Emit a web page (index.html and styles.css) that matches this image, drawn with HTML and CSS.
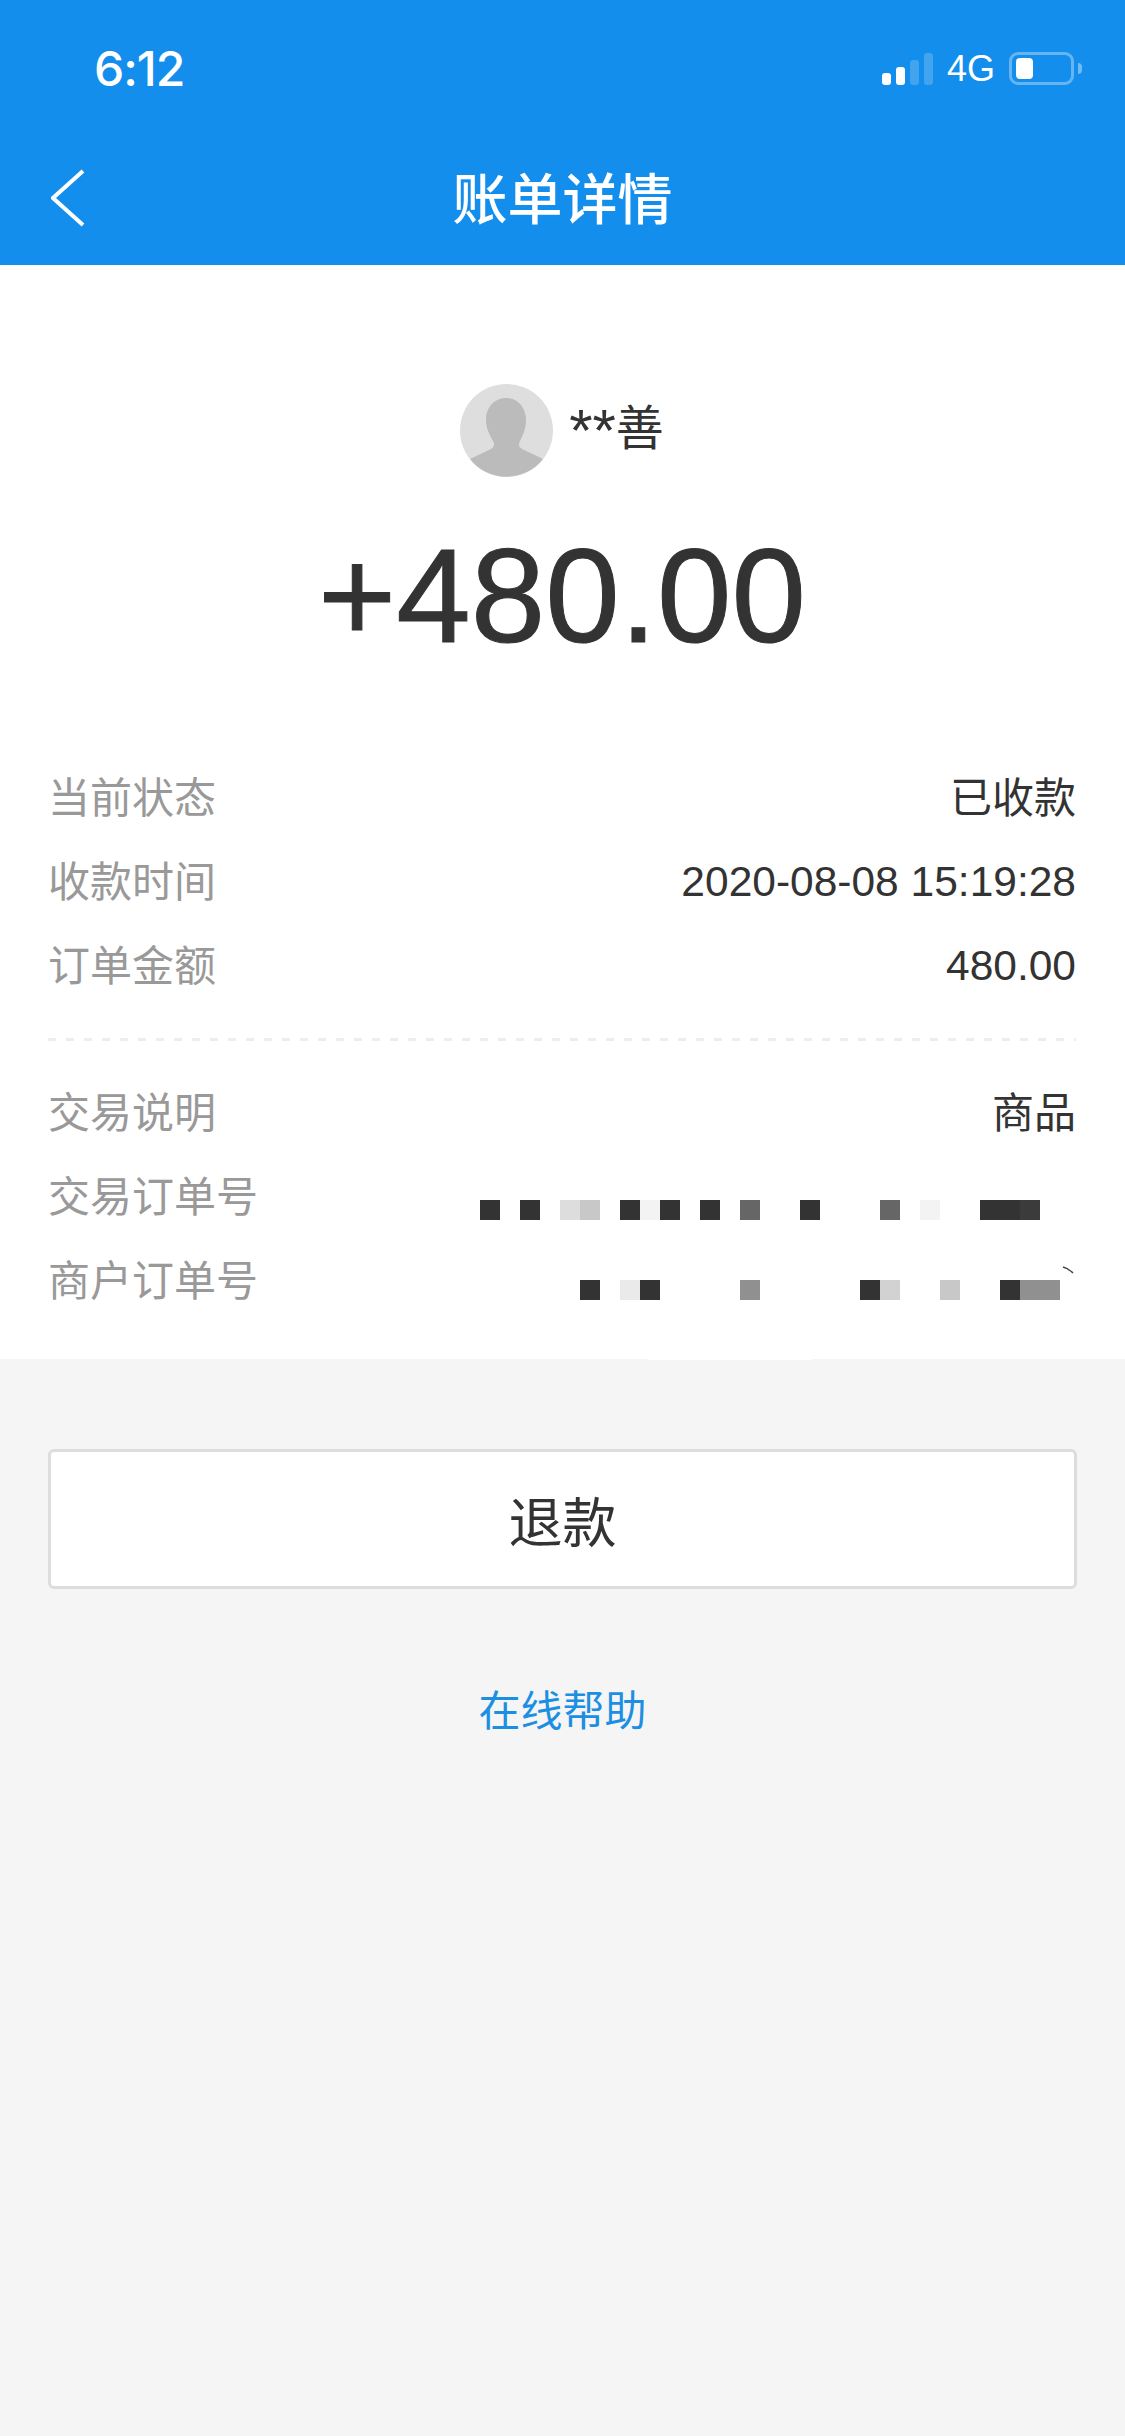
FILE: index.html
```html
<!DOCTYPE html>
<html lang="zh-CN">
<head>
    <meta charset="UTF-8">
    <meta name="viewport" content="width=device-width, initial-scale=1.0">
    <title>账单详情</title>
    <link rel="stylesheet" href="styles.css">
</head>
<body>

    <header class="top">
        <div class="status-bar">
            <span class="clock">6:12</span>
            <div class="status-icons">
                <div class="signal">
                    <i class="bar bar-1"></i>
                    <i class="bar bar-2"></i>
                    <i class="bar bar-3 off"></i>
                    <i class="bar bar-4 off"></i>
                </div>
                <span class="network">4G</span>
                <div class="battery"><i class="battery-level"></i></div>
                <i class="battery-nub"></i>
            </div>
        </div>
        <div class="nav-bar">
            <svg class="back" width="34" height="58" viewBox="0 0 34 58">
                <path d="M32 2 L2 29 L32 56" fill="none" stroke="#fff" stroke-width="4"/>
            </svg>
            <h1 class="nav-title">账单详情</h1>
        </div>
    </header>

    <section class="bill">
        <div class="payer">
            <svg class="avatar" width="93" height="93" viewBox="0 0 93 93">
                <circle cx="46.5" cy="46.5" r="46.5" fill="#dedede"/>
                <path d="M46 14 C34 14 26 24 26 36 C26 45 30 51 33 57 C35 61 34 63 31 65 L10 75 A46.5 46.5 0 0 0 83 75 L62 65 C59 63 58 61 60 57 C63 51 66 45 66 36 C66 24 58 14 46 14 Z" fill="#bbbbbb"/>
            </svg>
            <span class="payer-name"><span class="stars">**</span>善</span>
        </div>
        <div class="amount">+480.00</div>

        <div class="rows">
            <div class="row"><span class="label">当前状态</span><span class="value cjk">已收款</span></div>
            <div class="row"><span class="label">收款时间</span><span class="value">2020-08-08 15:19:28</span></div>
            <div class="row"><span class="label">订单金额</span><span class="value">480.00</span></div>
        </div>

        <div class="divider"></div>

        <div class="rows">
            <div class="row"><span class="label">交易说明</span><span class="value cjk">商品</span></div>
            <div class="row">
                <span class="label">交易订单号</span>
                <div class="mosaic">
                    <i class="d"></i><i></i><i class="d"></i><i></i><i class="g2"></i><i class="g3"></i><i></i><i class="d"></i><i class="g0"></i><i class="d"></i><i></i><i class="d"></i><i></i><i class="g5"></i><i></i><i></i><i class="d"></i><i></i><i></i><i></i><i class="g5"></i><i></i><i class="g0"></i><i></i><i></i><i class="d"></i><i class="d"></i><i class="d2"></i><i></i>
                </div>
            </div>
            <div class="row">
                <span class="label">商户订单号</span>
                <div class="mosaic mosaic-low">
                    <i></i><i></i><i></i><i></i><i></i><i class="d"></i><i></i><i class="g1"></i><i class="d"></i><i></i><i></i><i></i><i></i><i class="g4"></i><i></i><i></i><i></i><i></i><i></i><i class="d"></i><i class="g2b"></i><i></i><i></i><i class="g3"></i><i></i><i></i><i class="d"></i><i class="g4"></i><i class="g4"></i>
                </div>
                <svg class="tick" width="12" height="8" viewBox="0 0 12 8">
                    <path d="M1 1 C5 2 8 4 11 7" fill="none" stroke="#444" stroke-width="1.6"/>
                </svg>
            </div>
        </div>
    </section>

    <button class="refund">退款</button>
    <a class="help" href="#">在线帮助</a>

</body>
</html>
```

FILE: styles.css
```css
body {
    margin: 0;
    width: 1125px;
    height: 2436px;
    overflow: hidden;
    background-color: #f5f5f5;
    font-family: "Liberation Sans", "Noto Sans CJK SC", sans-serif;
    color: #333333;
}

.top {
    height: 265px;
    background-color: #138eec;
    color: #ffffff;
}

.status-bar {
    height: 132px;
    display: flex;
    justify-content: space-between;
    align-items: flex-start;
    box-sizing: border-box;
    padding: 0 43px 0 94px;
}

.clock {
    margin-top: 42px;
    font-family: Inter, sans-serif;
    font-size: 48px;
    line-height: 54px;
    font-weight: 500;
    letter-spacing: -1px;
}

.status-icons {
    margin-top: 52px;
    height: 33px;
    display: flex;
    align-items: center;
}

.signal {
    display: flex;
    align-items: flex-end;
    gap: 5px;
    height: 32px;
    align-self: flex-end;
}

.bar {
    width: 9px;
    background-color: #ffffff;
    border-radius: 3px;
}

.bar-1 { height: 12px; }
.bar-2 { height: 18px; }
.bar-3 { height: 25px; }
.bar-4 { height: 32px; }

.off {
    opacity: 0.2;
}

.network {
    margin-left: 14px;
    font-size: 36px;
    line-height: 33px;
}

.battery {
    margin-left: 14px;
    width: 65px;
    height: 33px;
    box-sizing: border-box;
    padding: 3px 4px;
    border: 3px solid rgba(255, 255, 255, 0.35);
    border-radius: 9px;
}

.battery-level {
    display: block;
    width: 17px;
    height: 21px;
    background-color: #ffffff;
    border-radius: 4px;
}

.battery-nub {
    margin-left: 4px;
    width: 4px;
    height: 11px;
    background-color: rgba(255, 255, 255, 0.4);
    border-radius: 0 4px 4px 0;
}

.nav-bar {
    position: relative;
    height: 133px;
    display: flex;
    align-items: center;
    justify-content: center;
}

.back {
    position: absolute;
    left: 51px;
    top: 37px;
}

.nav-title {
    margin: 2px 0 0;
    font-size: 55px;
    line-height: 70px;
    font-weight: 500;
}

.bill {
    position: relative;
    background-color: #ffffff;
    box-sizing: border-box;
    height: 1094px;
    padding: 119px 49px 0 48px;
}

.bill::after {
    content: "";
    position: absolute;
    left: 648px;
    bottom: -1px;
    width: 164px;
    height: 1px;
    background-color: #ffffff;
}

.payer {
    display: flex;
    justify-content: center;
    align-items: center;
    gap: 16px;
    height: 93px;
}

.payer-name {
    font-size: 48px;
    line-height: 60px;
    margin-bottom: 4px;
}

.stars {
    font-size: 60px;
    line-height: 40px;
    vertical-align: -6px;
}

.amount {
    margin-top: 52px;
    font-size: 134px;
    line-height: 134px;
    text-align: center;
    -webkit-text-stroke: 1px #333333;
}

.rows {
    display: flex;
    flex-direction: column;
}

.bill .amount + .rows {
    margin-top: 92px;
}

.row {
    position: relative;
    height: 84px;
    display: flex;
    justify-content: space-between;
    align-items: center;
    font-size: 42px;
}

.label {
    color: #999999;
    margin-bottom: 6px;
}

.value {
    font-size: 42.5px;
    margin-top: 2px;
}

.value.cjk {
    font-size: 42px;
    margin-top: 0;
    margin-bottom: 6px;
}

.divider {
    margin: 31px 0 29px;
    height: 3px;
    background-image: repeating-linear-gradient(to right, #eeeeee 0, #eeeeee 8px, transparent 8px, transparent 18px);
}

.mosaic {
    display: grid;
    grid-template-columns: repeat(29, 20px);
    grid-auto-rows: 20px;
    margin-right: 16px;
    margin-top: 28px;
}

.mosaic-low {
    margin-top: 20px;
}

.mosaic .d { background-color: #333333; }
.mosaic .d2 { background-color: #3b3b3b; }
.mosaic .g0 { background-color: #f3f3f3; }
.mosaic .g1 { background-color: #eaeaea; }
.mosaic .g2 { background-color: #dddddd; }
.mosaic .g2b { background-color: #d2d2d2; }
.mosaic .g3 { background-color: #c8c8c8; }
.mosaic .g4 { background-color: #909090; }
.mosaic .g5 { background-color: #666666; }

.tick {
    position: absolute;
    right: 2px;
    top: 28px;
}

.refund {
    display: block;
    margin: 90px auto 0;
    width: 1029px;
    height: 140px;
    box-sizing: border-box;
    background-color: #ffffff;
    border: 3px solid #dddddd;
    border-radius: 6px;
    font-family: "Liberation Sans", "Noto Sans CJK SC", sans-serif;
    font-size: 54px;
    color: #333333;
    padding: 0;
}

.help {
    display: block;
    margin-top: 93px;
    font-size: 42px;
    line-height: 60px;
    text-align: center;
    color: #1c8fe3;
    text-decoration: none;
}
```
